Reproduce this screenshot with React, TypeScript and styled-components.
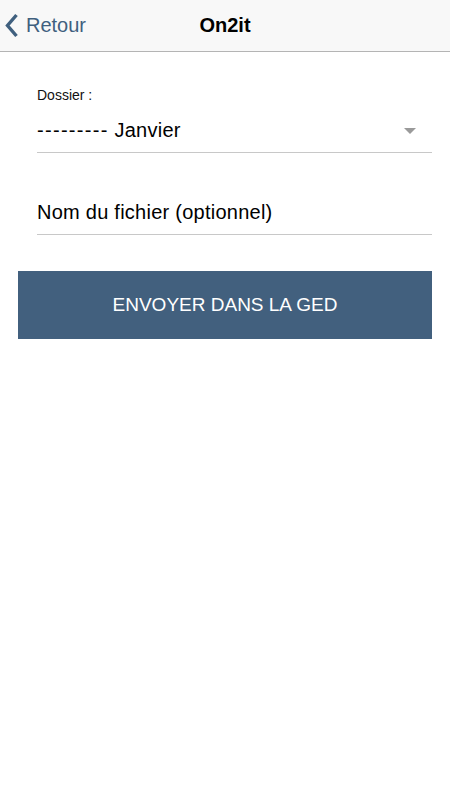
import { createGlobalStyle, styled } from "styled-components";

const GlobalStyle = createGlobalStyle`
  html, body {
    margin: 0;
    padding: 0;
    background: #ffffff;
    font-family: "Liberation Sans", Arial, sans-serif;
  }
`;

const Page = styled.div`
  width: 450px;
  min-height: 800px;
  background: #ffffff;
`;

const NavBar = styled.header`
  position: relative;
  height: 51px;
  background: #f8f8f8;
  border-bottom: 1px solid #b4b4b4;
  display: flex;
  align-items: center;
  justify-content: center;
`;

const BackButton = styled.button`
  position: absolute;
  left: 5px;
  top: 0;
  height: 51px;
  display: flex;
  align-items: center;
  gap: 7px;
  padding: 0;
  border: none;
  background: none;
  color: #40607f;
  font-family: "Liberation Sans", Arial, sans-serif;
  font-size: 20px;
  cursor: pointer;
`;

const Title = styled.h1`
  margin: 0;
  font-size: 20px;
  font-weight: 700;
  color: #000;
`;

const Form = styled.div`
  padding: 34px 18px 0 18px;
  display: flex;
  flex-direction: column;
`;

const Field = styled.div<{ $gap?: number }>`
  margin: 0 0 0 19px;
  padding-top: ${(p) => p.$gap ?? 0}px;
  display: flex;
  flex-direction: column;
`;

const Label = styled.label`
  font-size: 14px;
  color: #111;
  line-height: 18px;
`;

const Line = styled.div`
  display: flex;
  align-items: center;
  justify-content: space-between;
  height: 49px;
  padding-top: 5px;
  box-sizing: border-box;
  border-bottom: 1px solid #c8c8c8;
  font-size: 20px;
  letter-spacing: 0.25px;
  color: #000;
  padding-right: 16px;
`;

const Dashes = styled.span`
  letter-spacing: 1.3px;
`;

const Caret = styled.span`
  width: 0;
  height: 0;
  border-left: 6px solid transparent;
  border-right: 6px solid transparent;
  border-top: 6px solid #9a9a9a;
`;

const SendButton = styled.button`
  margin-top: 36px;
  height: 68px;
  width: 414px;
  border: none;
  background: #42607e;
  color: #fff;
  font-family: "Liberation Sans", Arial, sans-serif;
  font-size: 19px;
  cursor: pointer;
`;

export default function App() {
  return (
    <Page>
      <GlobalStyle />
      <NavBar>
        <BackButton>
          <svg width="14" height="25" viewBox="0 0 14 25">
            <path d="M11.5 2 L2.5 12.5 L11.5 23" fill="none" stroke="#40607f" strokeWidth="3.4" strokeLinecap="butt" />
          </svg>
          Retour
        </BackButton>
        <Title>On2it</Title>
      </NavBar>
      <Form>
        <Field>
          <Label>Dossier :</Label>
          <Line>
            <span>
              <Dashes>---------</Dashes> Janvier
            </span>
            <Caret />
          </Line>
        </Field>
        <Field $gap={33}>
          <Line>
            <span>Nom du fichier (optionnel)</span>
          </Line>
        </Field>
        <SendButton>ENVOYER DANS LA GED</SendButton>
      </Form>
    </Page>
  );
}
